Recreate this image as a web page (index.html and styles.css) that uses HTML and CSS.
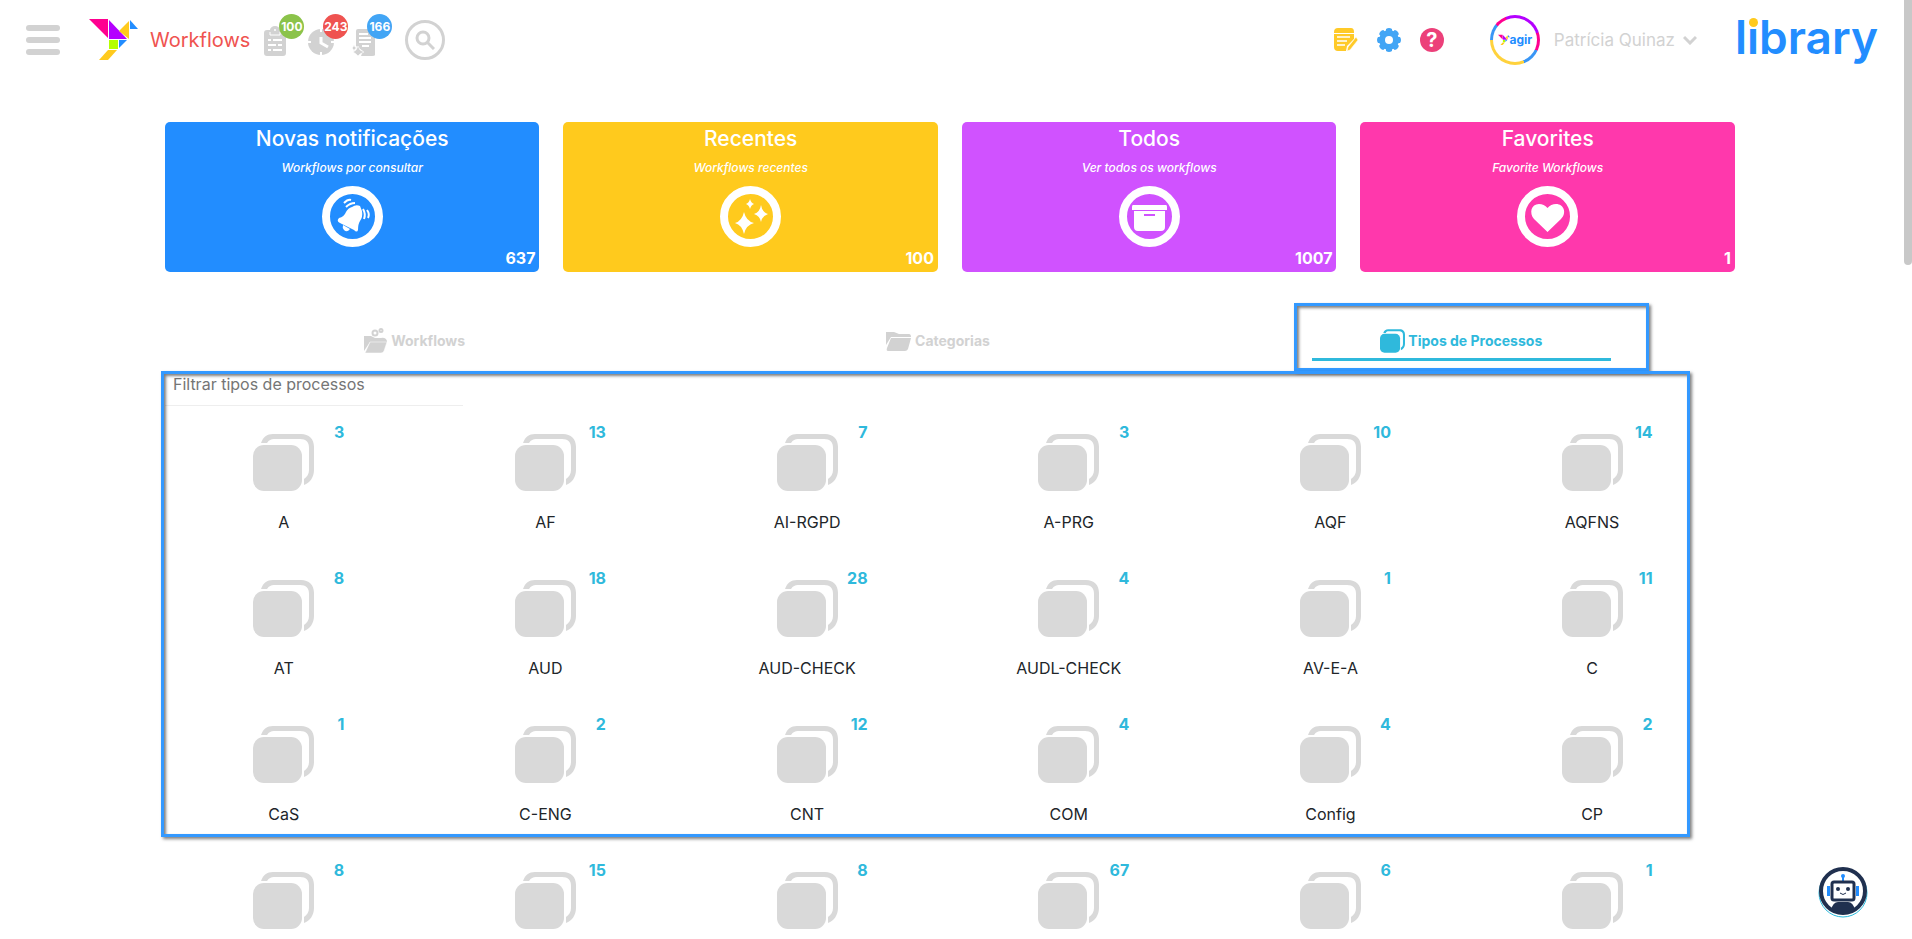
FILE: index.html
```html
<!DOCTYPE html>
<html lang="pt">
<head>
  <meta charset="UTF-8" />
  <meta name="viewport" content="width=device-width, initial-scale=1.0"/>
  <title>Workflows</title>
  <link rel="stylesheet" href="styles.css">
</head>
<body>

  <!-- shared icons -->
  <svg class="sprite" aria-hidden="true">
    <symbol id="stack" viewBox="0 0 61 57">
      <rect x="0" y="11" width="49" height="46" rx="11"/>
      <path d="M8 9C10 3 14 0 20 0H48C56 0 61 5 61 13V36C61 43 57 49 51 51V45C54 43 56 40 56 36V14C56 8 53 5 47 5H21C18 5 16 6 14 9Z"/>
    </symbol>
    <symbol id="bird" viewBox="0 0 49 42">
      <path fill="#ff0090" d="M0 0H19V19Z"/>
      <path fill="#b400ff" d="M20 1L38 20H20Z"/>
      <path fill="#ffca1d" d="M30 12L40 2V20Z"/>
      <path fill="#228dff" d="M41 1L49 10H41Z"/>
      <path fill="#b4ff00" d="M20 21H29V30H20Z"/>
      <path fill="#228dff" d="M30 21H38L30 29Z"/>
      <path fill="#ffca1d" d="M19 31H28L19 41H10Z"/>
    </symbol>
  </svg>

  <header class="topbar">
    <button class="menu" aria-label="Menu"><span></span><span></span><span></span></button>
    <a class="brand" href="#">
      <svg class="bird"><use href="#bird"/></svg>
      <span>Workflows</span>
    </a>
    <nav class="alerts">
      <a href="#" aria-label="Tarefas">
        <svg width="22" height="30" viewBox="0 0 22 30" fill="#d2d2d2"><path d="M3 4H6A5 4 0 0 1 16 4H19Q22 4 22 7V27Q22 30 19 30H3Q0 30 0 27V7Q0 4 3 4Z"/><path d="M6 6V9H16V6" fill="none" stroke="#fff"/><circle cx="11" cy="4" r="1" fill="#fff"/><path d="M4 14H7M9 14H18M4 19H12M14 19H18M4 24H7M9 24H18" stroke="#fff" stroke-width="2"/></svg>
        <span class="badge green">100</span>
      </a>
      <a href="#" aria-label="Atrasados">
        <svg width="27" height="27" viewBox="0 0 27 27"><circle cx="13" cy="13" r="13" fill="#d2d2d2"/><path d="M13 0V3M13 23V27M0 13H3M23 13H27" stroke="#fff" stroke-width="2"/><path d="M13 8V14L20 18" fill="none" stroke="#fff" stroke-width="3"/></svg>
        <span class="badge red">243</span>
      </a>
      <a href="#" aria-label="Novos">
        <svg width="24" height="28" viewBox="0 0 24 28"><path d="M6 1H18Q23 1 23 6V27Q23 28 20 28H9L11 23L4 18V3Q4 1 6 1Z" fill="#d2d2d2"/><path d="M7 6H16M7 10H19M7 14H19M10 18H17" stroke="#fff" stroke-width="2"/><path d="M6 18L8 22L12 24L8 26L6 28L4 26L1 24L4 22ZM2 17L3 19L5 20L3 21L2 23L1 21L0 20L1 19Z" fill="#d2d2d2" stroke="#fff" stroke-width=".6"/></svg>
        <span class="badge blue">166</span>
      </a>
    </nav>
    <button class="search" aria-label="Pesquisar">
      <svg width="20" height="20" viewBox="0 0 20 20" fill="none" stroke="#d2d2d2" stroke-width="3"><circle cx="8" cy="8" r="6"/><path d="M12 12L19 19"/></svg>
    </button>

    <div class="tools">
      <button aria-label="Notas">
        <svg width="24" height="24" viewBox="0 0 24 24"><path d="M4 0H17Q20 0 20 4V5H0V4Q0 0 4 0ZM0 6H20V11L13 18L12 23H4Q0 23 0 19Z" fill="#ffca28"/><path d="M3 9H16M3 13H13M3 17H11" stroke="#fff" stroke-width="1.5"/><path d="M22 9L24 12L16 22L13 23L14 19Z" fill="#ffca28" stroke="#fff" stroke-width=".6"/></svg>
      </button>
      <button aria-label="Definições">
        <svg width="24" height="24" viewBox="0 0 24 24"><g fill="#42a5f5"><circle cx="12" cy="12" r="10"/><path id="tooth" d="M9 1Q12 -1 15 1V23Q12 25 9 23Z"/><use href="#tooth" transform="rotate(45 12 12)"/><use href="#tooth" transform="rotate(90 12 12)"/><use href="#tooth" transform="rotate(135 12 12)"/></g><circle cx="12" cy="12" r="4" fill="#fff"/></svg>
      </button>
      <button class="help" aria-label="Ajuda">?</button>
    </div>

    <button class="user">
      <span class="avatar"><svg><use href="#bird"/></svg><b>agir</b></span>
      <span>Patrícia Quinaz</span>
      <svg width="14" height="10" viewBox="0 0 14 10" fill="none" stroke="#d2d2d2" stroke-width="3"><path d="M1 2L7 8L13 2"/></svg>
    </button>
    <a class="library" href="#">l<span>i</span>brary</a>
  </header>

  <main>
    <section class="cards">
      <a class="card blue-card" href="#">
        <h2>Novas notificações</h2>
        <p>Workflows por consultar</p>
        <svg class="round" viewBox="0 0 61 61"><circle cx="30.500" cy="30.500" r="26.500" fill="none" stroke="#fff" stroke-width="8"/><path d="M30 21Q34 18 38 20L40 25Q41 31 38 35Q36 38 36 44Q35 47 32 44L18 37Q14 35 17 32Q22 31 24 26Q26 22 30 21Z" fill="#fff"/><path d="M21 39L28 43Q25 47 22 44Q20 42 21 39Z" fill="#fff"/><path d="M22 17Q26 13 29 14M24 21Q28 17 33 17M41 23Q44 28 42 33M45 24Q48 28 46 32" fill="none" stroke="#fff" stroke-width="2"/></svg>
        <strong>637</strong>
      </a>
      <a class="card yellow-card" href="#">
        <h2>Recentes</h2>
        <p>Workflows recentes</p>
        <svg class="round" viewBox="0 0 61 61"><circle cx="30.500" cy="30.500" r="26.500" fill="none" stroke="#fff" stroke-width="8"/><path d="M24 26Q26 35 34 37Q26 39 24 48Q22 39 15 37Q22 35 24 26ZM41 19Q42 26 48 28Q42 30 41 36Q40 30 34 28Q40 26 41 19ZM30 13Q31 17 34 18Q31 19 30 23Q29 19 26 18Q29 17 30 13Z" fill="#fff"/></svg>
        <strong>100</strong>
      </a>
      <a class="card purple-card" href="#">
        <h2>Todos</h2>
        <p>Ver todos os workflows</p>
        <svg class="round" viewBox="0 0 61 61"><circle cx="30.500" cy="30.500" r="26.500" fill="none" stroke="#fff" stroke-width="8"/><path d="M14 19H47Q48 19 48 21V24H13V21Q13 19 14 19ZM15 25H46V41Q46 45 42 45H19Q15 45 15 41Z" fill="#fff"/><path d="M25 29H36" stroke="#d052ff" stroke-width="2"/></svg>
        <strong>1007</strong>
      </a>
      <a class="card pink-card" href="#">
        <h2>Favorites</h2>
        <p>Favorite Workflows</p>
        <svg class="round" viewBox="0 0 61 61"><circle cx="30.500" cy="30.500" r="26.500" fill="none" stroke="#fff" stroke-width="8"/><path d="M30.500 46L17 33C12 27 14 18 22 18Q27 18 30.500 22Q34 18 39 18C47 18 50 27 44 33Z" fill="#fff"/></svg>
        <strong>1</strong>
      </a>
    </section>

    <nav class="tabs">
      <button class="tab">
        <svg width="24" height="26" viewBox="0 0 24 26"><path d="M0 8H7L11 10H17A5 5 0 0 1 23 13V14H6L0 23Z" fill="#d2d2d2"/><path d="M6 14H23L20 23Q19 25 17 25H1Z" fill="#d2d2d2" stroke="#fff" stroke-width=".5"/><g fill="none" stroke="#d2d2d2" stroke-width="2"><circle cx="11" cy="5" r="2.500"/><circle cx="17" cy="2.500" r="1.500"/></g></svg>
        Workflows
      </button>
      <button class="tab">
        <svg width="26" height="20" viewBox="0 0 26 20" fill="#d2d2d2"><path d="M0 1H8L13 3H23Q25 3 25 6H5L0 14Z"/><path d="M5 7H25L22 18Q21 20 19 20H2Q0 20 1 17Z"/></svg>
        Categorias
      </button>
      <button class="tab active">
        <svg width="25" height="24"><use href="#stack"/></svg>
        Tipos de Processos
      </button>
    </nav>

    <section class="panel">
      <input class="filter" type="text" placeholder="Filtrar tipos de processos" aria-label="Filtrar tipos de processos">
      <div class="tiles" id="tiles"></div>
    </section>
  </main>

  <button class="chatbot" aria-label="Assistente">
    <svg width="52" height="52" viewBox="0 0 52 52"><circle cx="26" cy="27" r="24" fill="#fff" stroke="#28b9dc"/><circle cx="26" cy="25" r="22" fill="#fff" stroke="#20304f" stroke-width="4"/><path d="M14 44Q16 36 21 36H31Q36 36 38 44Q26 52 14 44Z" fill="#20304f"/><path d="M26 15V11" stroke="#228dff" stroke-width="2"/><circle cx="26" cy="10" r="2" fill="#228dff"/><path d="M10 20H13V30H10ZM39 20H42V30H39Z" fill="#228dff"/><rect x="15" y="16" width="22" height="18" rx="2" fill="#fff" stroke="#20304f" stroke-width="3"/><circle cx="21" cy="23" r="2" fill="#20304f"/><circle cx="31" cy="23" r="2" fill="#20304f"/><path d="M23 27Q26 30 29 27" fill="none" stroke="#20304f"/></svg>
  </button>
  <div class="scroll-thumb"></div>

  <script src="script.js"></script>
</body>
</html>
```

FILE: styles.css
```css
*,
*::before,
*::after {
  box-sizing: border-box;
}

body {
  margin: 0;
  height: 100vh;
  overflow: hidden;
  background: #fff;
  color: #212529;
  font-family: Inter, sans-serif;
  font-size: 16px;
  line-height: 24px;
}

button {
  background: none;
  border: 0;
  padding: 0;
  font: inherit;
  color: inherit;
  cursor: pointer;
}

a {
  color: inherit;
  text-decoration: none;
}

svg {
  display: block;
}

.sprite {
  position: absolute;
  width: 0;
  height: 0;
}

/* top bar */
.topbar {
  display: flex;
  align-items: center;
  height: 80px;
  padding: 0 34px 0 26px;
}

.menu {
  display: flex;
  flex-direction: column;
  gap: 6px;
  width: 34px;
}

.menu span {
  height: 6px;
  border-radius: 3px;
  background: #d2d2d2;
}

.brand {
  display: flex;
  align-items: center;
  gap: 12px;
  margin-left: 29px;
  color: #ef5350;
  font-size: 20px;
}

.bird {
  width: 49px;
  height: 42px;
}

.alerts {
  display: flex;
  align-items: flex-end;
  gap: 20px;
  margin-left: 14px;
  height: 32px;
}

.alerts a {
  position: relative;
  width: 24px;
}

.badge {
  position: absolute;
  left: 15px;
  bottom: 17px;
  width: 25px;
  height: 25px;
  border-radius: 50%;
  color: #fff;
  font-size: 12px;
  font-weight: 700;
  line-height: 25px;
  display: flex;
  justify-content: center;
}

.green {
  background: #8bc34a;
}

.red {
  background: #ef5350;
}

.blue {
  background: #42a5f5;
}

.search {
  display: grid;
  place-items: center;
  width: 40px;
  height: 40px;
  margin-left: 29px;
  border: 3px solid #d2d2d2;
  border-radius: 50%;
}

.tools {
  display: flex;
  gap: 19px;
  margin-left: auto;
}

.help {
  width: 24px;
  height: 24px;
  border-radius: 50%;
  background: #ec407a;
  color: #fff;
  font-size: 20px;
  font-weight: 700;
  line-height: 24px;
}

.user {
  display: flex;
  align-items: center;
  gap: 8px;
  margin-left: 46px;
  color: #d2d2d2;
  font-size: 17px;
}

.avatar {
  display: flex;
  align-items: center;
  justify-content: center;
  width: 50px;
  height: 50px;
  margin-right: 6px;
  border: 3px solid transparent;
  border-radius: 50%;
  background: linear-gradient(#fff, #fff) padding-box, conic-gradient(#b400ff 0 20%, #ff0090 0 32%, #3a96f5 0 44%, #ffd23c 0 75%, #3a96f5 0 86%, #ff0090 0 94%, #b400ff 0) border-box;
  color: #228dff;
  font-size: 12px;
}

.avatar svg {
  width: 12px;
  height: 14px;
}

.library {
  margin-left: 38px;
  padding-bottom: 7px;
  color: #228dff;
  font-size: 46px;
  font-weight: 600;
  line-height: 46px;
}

.library span {
  position: relative;
}

.library span::before {
  content: "";
  position: absolute;
  left: 2px;
  top: 9px;
  width: 9px;
  height: 9px;
  border-radius: 50%;
  background: #ffca1d;
}

/* cards */
main {
  max-width: 1594px;
  margin: 42px auto 0 8%;
}

.cards {
  display: grid;
  grid-template-columns: repeat(4, 1fr);
  gap: 24px;
  padding: 0 12px;
}

.card {
  position: relative;
  display: flex;
  flex-direction: column;
  align-items: center;
  height: 150px;
  padding-top: 4px;
  border-radius: 5px;
  color: #fff;
}

.card h2 {
  margin: 0;
  font-size: 21px;
  font-weight: 500;
  line-height: 26px;
}

.card p {
  margin: 4px 0 6px;
  font-size: 12px;
  font-style: italic;
  font-weight: 500;
}

.card strong {
  position: absolute;
  right: 4px;
  bottom: 2px;
}

.round {
  width: 61px;
  height: 61px;
}

.blue-card {
  background: #228dff;
}

.yellow-card {
  background: #ffca1d;
}

.purple-card {
  background: #d052ff;
}

.pink-card {
  background: #ff38ac;
}

/* tabs */
.tabs {
  display: grid;
  grid-template-columns: repeat(3, 1fr);
  margin: 31px 24px 0 0;
}

.tab {
  position: relative;
  display: flex;
  align-items: center;
  justify-content: center;
  gap: 3px;
  height: 68px;
  padding-top: 8px;
  color: #d2d2d2;
  font-size: 14px;
  font-weight: 700;
}

.tab.active {
  color: #2fb9dc;
  fill: #2fb9dc;
}

.tab.active::before {
  content: "";
  position: absolute;
  left: 112px;
  right: 112px;
  bottom: 10px;
  height: 3px;
  background: #2fb9dc;
}

/* highlight frames */
.tab.active::after,
.panel::after {
  content: "";
  position: absolute;
  border: 3px solid #39f;
  box-shadow: 2px 2px 3px rgba(0, 0, 0, .5), inset 2px 2px 3px rgba(0, 0, 0, .5);
  pointer-events: none;
}

.tab.active::after {
  inset: 0 74px 0 94px;
}

.panel {
  position: relative;
  margin-right: 24px;
}

.panel::after {
  top: 0;
  left: 8px;
  right: 33px;
  height: 466px;
}

.filter {
  display: block;
  width: 298px;
  height: 35px;
  margin-left: 12px;
  padding: 0 8px 8px;
  border: 0;
  border-bottom: 1px solid #eee;
  font: inherit;
  outline: none;
}

.filter::placeholder {
  color: #757575;
}

.tiles {
  display: grid;
  grid-template-columns: repeat(6, 1fr);
  padding-top: 14px;
}

.tile {
  display: flex;
  flex-direction: column;
  gap: 19px;
  height: 146px;
  text-align: center;
}

.tile-top {
  display: grid;
  grid-template-columns: 1fr 61px 1fr;
}

.tile svg {
  grid-column: 2;
  width: 61px;
  height: 57px;
  margin-top: 14px;
  fill: #d9d9d9;
}

.tile b {
  grid-column: 3;
  width: 30px;
  text-align: right;
  color: #2fb9dc;
}

.chatbot {
  position: fixed;
  right: 43px;
  bottom: 21px;
}

.scroll-thumb {
  position: fixed;
  top: 0;
  right: 0;
  width: 8px;
  height: 265px;
  border-radius: 0 0 4px 4px;
  background: #c8c8c8;
}
```

FILE: script.js
```js
const types = [
  ["A", 3], ["AF", 13], ["AI-RGPD", 7], ["A-PRG", 3], ["AQF", 10], ["AQFNS", 14],
  ["AT", 8], ["AUD", 18], ["AUD-CHECK", 28], ["AUDL-CHECK", 4], ["AV-E-A", 1], ["C", 11],
  ["CaS", 1], ["C-ENG", 2], ["CNT", 12], ["COM", 4], ["Config", 4], ["CP", 2],
  ["", 8], ["", 15], ["", 8], ["", 67], ["", 6], ["", 1]
];

document.getElementById("tiles").innerHTML = types.map(([name, count]) => `
  <a class="tile" href="#">
    <div class="tile-top"><svg><use href="#stack"/></svg><b>${count}</b></div>
    <span>${name}</span>
  </a>`).join("");
```
